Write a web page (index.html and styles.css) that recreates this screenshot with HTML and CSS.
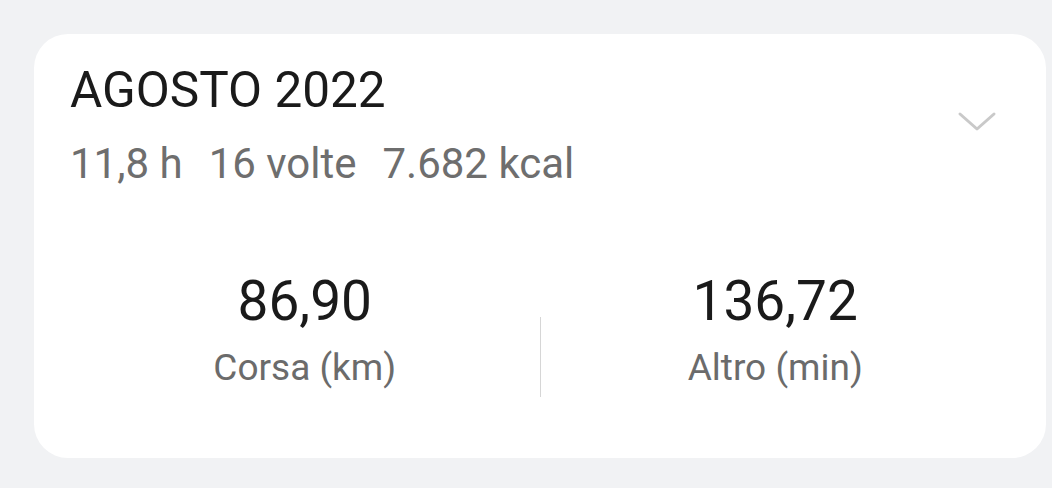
FILE: index.html
```html
<!DOCTYPE html>
<html lang="it">
<head>
  <meta charset="UTF-8">
  <title>Agosto 2022</title>
  <link rel="stylesheet" href="styles.css">
</head>
<body>
  <div class="card">
    <div class="header">
      <div class="header-text">
        <div class="titolo">AGOSTO 2022</div>
        <div class="riepilogo">
          <span>11,8 h</span>
          <span>16 volte</span>
          <span>7.682 kcal</span>
        </div>
      </div>
      <svg class="chevron" width="40" height="22" viewBox="0 0 40 22">
        <polyline points="3,3 20,18 37,3" fill="none" stroke="#c9c9c9" stroke-width="3" stroke-linecap="round" stroke-linejoin="round"/>
      </svg>
    </div>

    <div class="stats">
      <div class="stat">
        <div class="valore">86,90</div>
        <div class="etichetta">Corsa (km)</div>
      </div>
      <div class="divisore"></div>
      <div class="stat">
        <div class="valore">136,72</div>
        <div class="etichetta">Altro (min)</div>
      </div>
    </div>
  </div>
</body>
</html>
```

FILE: styles.css
```css
body {
  margin: 0;
  padding: 34px 6px 0 34px;
  background-color: #f1f2f4;
  font-family: Roboto, "Noto Sans", sans-serif;
}

.card {
  background-color: #fff;
  border-radius: 34px;
  padding: 28px 36px 61px 36px;
}

.header {
  display: flex;
  justify-content: space-between;
  align-items: center;
}

.titolo {
  font-size: 49.5px;
  line-height: 56px;
  color: #1a1a1a;
}

.riepilogo {
  margin-top: 22px;
  font-size: 42px;
  line-height: 48px;
  color: #6e6e6e;
  display: flex;
  gap: 26px;
}

.chevron {
  margin-right: 13px;
  margin-top: -6px;
}

.stats {
  display: grid;
  grid-template-columns: 1fr 1px 1fr;
  margin-top: 81px;
}

.stat {
  text-align: center;
}

.valore {
  font-size: 55px;
  line-height: 64px;
  color: #1a1a1a;
}

.etichetta {
  margin-top: 13px;
  font-size: 37px;
  line-height: 44px;
  color: #6b6b6b;
}

.divisore {
  background-color: #d6d6d6;
  height: 80px;
  margin-top: 48px;
}
```
